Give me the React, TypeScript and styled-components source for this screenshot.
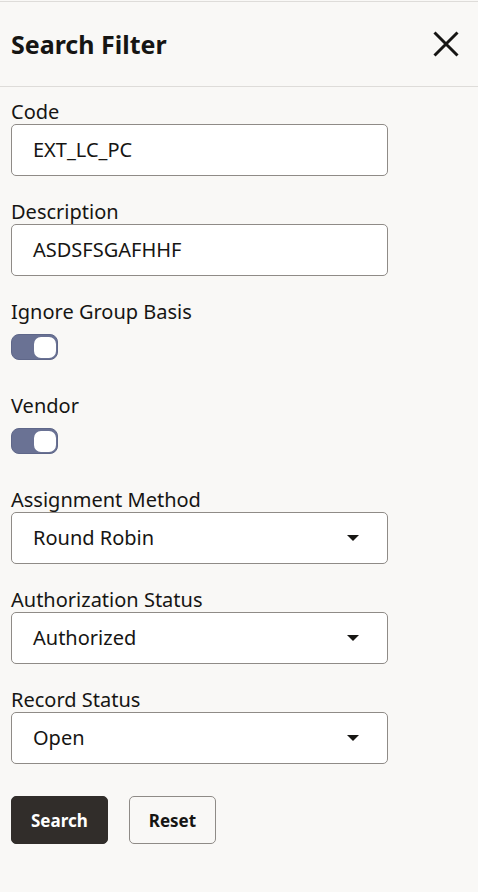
import React from "react";
import styled, { createGlobalStyle } from "styled-components";

const GlobalStyle = createGlobalStyle`
  html, body {
    margin: 0;
    padding: 0;
    background: #f9f8f6;
  }
  body {
    font-family: "Noto Sans", "Open Sans", sans-serif;
    color: #161513;
  }
  * { box-sizing: border-box; }
`;

const Panel = styled.div`
  width: 478px;
  min-height: 892px;
  background: #f9f8f6;
  padding-top: 1px;
`;

const Header = styled.header`
  height: 86px;
  border-top: 1px solid #dedcd9;
  border-bottom: 1px solid #dedcd9;
  display: flex;
  align-items: center;
  justify-content: space-between;
  padding: 0 19px 0 11px;
`;

const Title = styled.h1`
  margin: 0;
  font-size: 25px;
  font-weight: 700;
  color: #161513;
  line-height: 32px;
`;

const CloseButton = styled.button`
  width: 26px;
  height: 26px;
  padding: 0;
  border: none;
  background: none;
  display: flex;
  align-items: center;
  justify-content: center;
  cursor: pointer;
`;

const Form = styled.form`
  display: flex;
  flex-direction: column;
  gap: 24px;
  padding: 13px 0 0 11px;
`;

const Field = styled.div`
  display: flex;
  flex-direction: column;
  width: 377px;
`;

const Label = styled.label`
  font-size: 20px;
  line-height: 24px;
  height: 24px;
  color: #161513;
`;

const Box = styled.div`
  height: 52px;
  border: 1px solid #8f8b87;
  border-radius: 5px;
  background: #ffffff;
  display: flex;
  align-items: center;
  padding: 0 28px 0 21px;
  font-size: 20px;
  color: #161513;
`;

const Value = styled.span`
  flex: 1;
  line-height: 24px;
`;

const Caret = styled.span`
  width: 0;
  height: 0;
  border-left: 6px solid transparent;
  border-right: 6px solid transparent;
  border-top: 6px solid #161513;
`;

const SwitchArea = styled.div`
  height: 46px;
  display: flex;
  align-items: center;
`;

const Track = styled.span<{ $on: boolean }>`
  width: 47px;
  height: 26px;
  border-radius: 8px;
  background: ${(p) => (p.$on ? "#6a7294" : "#c9c6c2")};
  border: 1px solid ${(p) => (p.$on ? "#5f6789" : "#b1ada8")};
  display: flex;
  align-items: center;
  justify-content: ${(p) => (p.$on ? "flex-end" : "flex-start")};
  padding: 0 1px;
`;

const Knob = styled.span`
  width: 22px;
  height: 21px;
  border-radius: 7px;
  background: #ffffff;
`;

const Actions = styled.div`
  display: flex;
  gap: 21px;
  margin-top: 8px;
`;

const Button = styled.button<{ $primary?: boolean }>`
  height: 48px;
  padding: 0 19px;
  border-radius: 5px;
  font-family: inherit;
  font-size: 17px;
  font-weight: 700;
  cursor: pointer;
  background: ${(p) => (p.$primary ? "#312d2a" : "transparent")};
  color: ${(p) => (p.$primary ? "#ffffff" : "#161513")};
  border: 1px solid ${(p) => (p.$primary ? "#312d2a" : "#8f8b87")};
`;

const CloseIcon = () => (
  <svg width="26" height="26" viewBox="0 0 26 26">
    <path d="M1.5 1.5 L24.5 24.5 M24.5 1.5 L1.5 24.5" stroke="#161513" strokeWidth="3" fill="none" />
  </svg>
);

const TextField = ({ label, value }: { label: string; value: string }) => (
  <Field>
    <Label>{label}</Label>
    <Box>
      <Value>{value}</Value>
    </Box>
  </Field>
);

const SelectField = ({ label, value }: { label: string; value: string }) => (
  <Field>
    <Label>{label}</Label>
    <Box>
      <Value>{value}</Value>
      <Caret />
    </Box>
  </Field>
);

const SwitchField = ({ label, on }: { label: string; on: boolean }) => (
  <Field>
    <Label>{label}</Label>
    <SwitchArea>
      <Track $on={on}>
        <Knob />
      </Track>
    </SwitchArea>
  </Field>
);

export default function App() {
  return (
    <>
      <GlobalStyle />
      <Panel>
        <Header>
          <Title>Search Filter</Title>
          <CloseButton aria-label="Close">
            <CloseIcon />
          </CloseButton>
        </Header>
        <Form onSubmit={(e) => e.preventDefault()}>
          <TextField label="Code" value="EXT_LC_PC" />
          <TextField label="Description" value="ASDSFSGAFHHF" />
          <SwitchField label="Ignore Group Basis" on />
          <SwitchField label="Vendor" on />
          <SelectField label="Assignment Method" value="Round Robin" />
          <SelectField label="Authorization Status" value="Authorized" />
          <SelectField label="Record Status" value="Open" />
          <Actions>
            <Button $primary type="submit">Search</Button>
            <Button type="button">Reset</Button>
          </Actions>
        </Form>
      </Panel>
    </>
  );
}
